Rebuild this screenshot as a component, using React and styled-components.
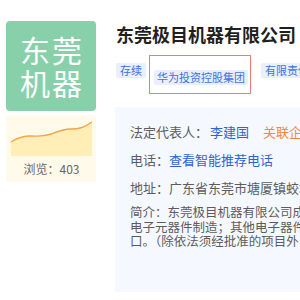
import React from 'react';
import styled, { createGlobalStyle } from 'styled-components';

const GlobalStyle = createGlobalStyle`
  html, body {
    margin: 0;
    padding: 0;
    background: #ffffff;
    overflow: hidden;
  }
  body {
    font-family: "Noto Sans CJK SC", "Noto Sans", sans-serif;
  }
`;

const Page = styled.div`
  display: flex;
  flex-direction: row;
  align-items: flex-start;
  gap: 19px;
  padding: 21px 0 0 6px;
  width: 600px;
`;

const LeftCol = styled.div`
  display: flex;
  flex-direction: column;
  gap: 5px;
  width: 90px;
  flex: none;
`;

const Logo = styled.div`
  width: 90px;
  height: 90px;
  border-radius: 4px;
  background: #88d0aa;
  color: #ffffff;
  font-size: 30px;
  line-height: 33px;
  letter-spacing: 2px;
  display: flex;
  flex-direction: column;
  align-items: center;
  justify-content: center;
  padding-left: 2px;
  box-sizing: border-box;
`;

const StatBox = styled.div`
  background: #fffaea;
  border-radius: 2px;
  padding: 5px 4px 5px 5px;
  display: flex;
  flex-direction: column;
`;

const Views = styled.div`
  margin-top: 5px;
  font-size: 12px;
  line-height: 16px;
  color: #666666;
  text-align: center;
`;

const RightCol = styled.div`
  display: flex;
  flex-direction: column;
  width: 440px;
  flex: none;
`;

const Title = styled.div`
  font-size: 18px;
  line-height: 26px;
  font-weight: bold;
  color: #1f1f1f;
  padding-left: 1px;
  white-space: nowrap;
`;

const TagRow = styled.div`
  display: flex;
  flex-direction: row;
  gap: 8px;
  margin-top: 16px;
  padding-left: 1px;
`;

const Tag = styled.span`
  display: inline-block;
  height: 15px;
  line-height: 15px;
  padding: 0 ${p => p.pad || 4}px;
  font-size: 11px;
  color: #3f72e0;
  background: #e9effd;
  border-radius: 2px;
  white-space: nowrap;
`;

const Marked = styled.span`
  position: relative;
  display: inline-block;
  margin-right: 5px;
`;

const MarkFrame = styled.span`
  position: absolute;
  top: -8px;
  bottom: -7px;
  left: -5px;
  right: -3px;
  border: 1px solid #f07a7a;
`;

const InfoPanel = styled.div`
  margin-top: ${p => p.gapTop}px;
  height: ${p => p.h}px;
  background: #f5f8fe;
  padding: 11px 0 0 15px;
  box-sizing: border-box;
  color: #5c5c5c;
  font-size: 13px;
`;

const Row = styled.div`
  line-height: 28px;
  white-space: nowrap;
`;

const Link = styled.span`
  color: ${p => (p.orange ? '#f5883a' : '#2e63d8')};
  margin-left: ${p => p.ml || 0}px;
`;

const Intro = styled.div`
  margin-top: 3px;
  font-size: 12.5px;
  line-height: 14.5px;
`;

const IntroLine = styled.div`
  white-space: nowrap;
`;

const Trend = () => (
  <svg width="81" height="35" viewBox="0 0 81 35">
    <path
      d="M0 21 C6 17, 12 15, 20 15 S 32 16, 40 13 S 52 8, 60 8 S 72 7, 81 1 L81 35 L0 35 Z"
      fill="#ffefb6"
    />
    <path
      d="M0 21 C6 17, 12 15, 20 15 S 32 16, 40 13 S 52 8, 60 8 S 72 7, 81 1"
      fill="none"
      stroke="#f6a24c"
      strokeWidth="1.4"
    />
  </svg>
);

const App = () => (
  <>
    <GlobalStyle />
    <Page>
      <LeftCol>
        <Logo>
          <div>东莞</div>
          <div>机器</div>
        </Logo>
        <StatBox>
          <Trend />
          <Views>浏览：403</Views>
        </StatBox>
      </LeftCol>
      <RightCol>
        <Title>东莞极目机器有限公司</Title>
        <TagRow>
          <Tag>存续</Tag>
          <Marked>
            <Tag pad={3}>华为投资控股集团</Tag>
            <MarkFrame />
          </Marked>
          <Tag>有限责任公司</Tag>
        </TagRow>
        <InfoPanel gapTop={20} h={185}>
          <Row>
            法定代表人：<Link ml={2}>李建国</Link>
            <Link orange ml={14}>关联企业 12</Link>
          </Row>
          <Row>
            电话：<Link>查看智能推荐电话</Link>
          </Row>
          <Row>地址：广东省东莞市塘厦镇蛟坪大道</Row>
          <Intro>
            <IntroLine>简介：东莞极目机器有限公司成立于2019年，经营范围包括：</IntroLine>
            <IntroLine>电子元器件制造；其他电子器件制造；货物进出口；技术进出</IntroLine>
            <IntroLine>口。（除依法须经批准的项目外，凭营业执照依法自主开展经营活动）</IntroLine>
          </Intro>
        </InfoPanel>
        <InfoPanel gapTop={15} h={60} />
      </RightCol>
    </Page>
  </>
);

export default App;
